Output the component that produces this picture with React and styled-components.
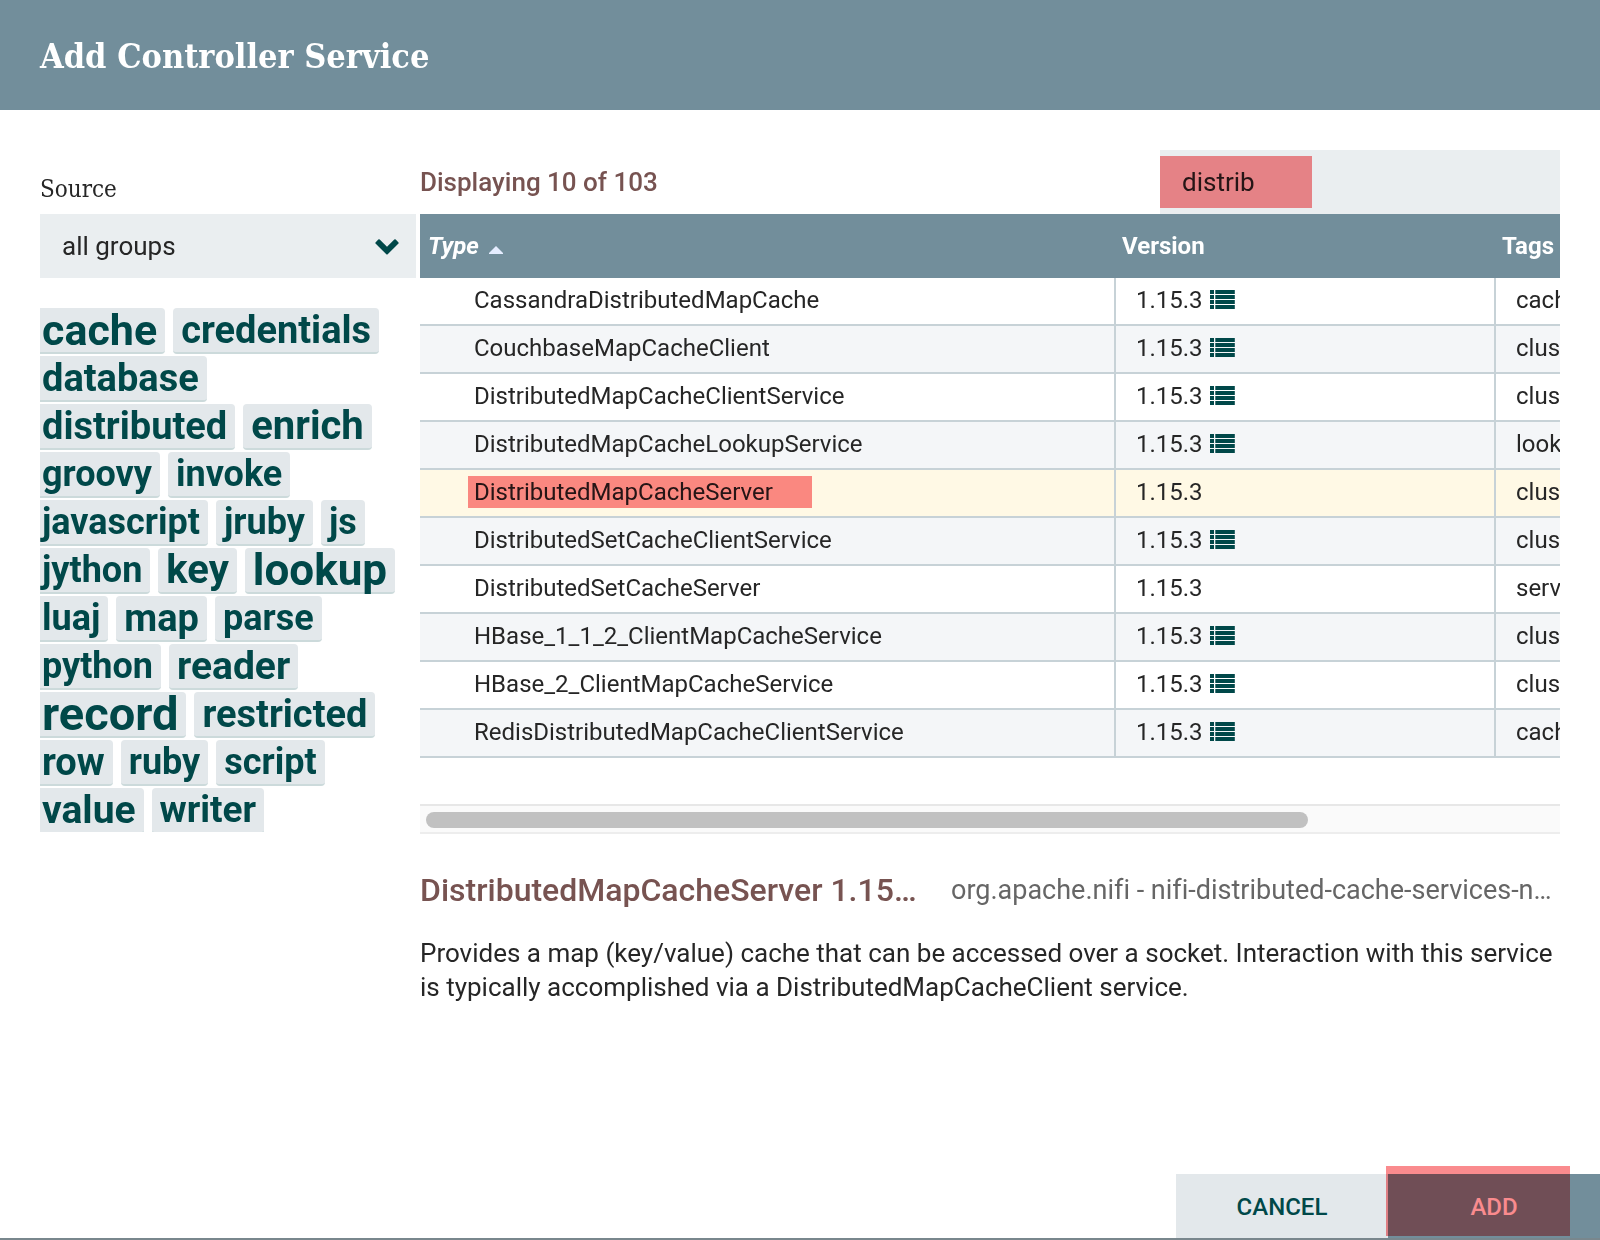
import React, { useState } from "react";
import styled, { createGlobalStyle, css } from "styled-components";

const color = {
  slate: "#728e9b",
  teal: "#004849",
  ink: "#262626",
  brown: "#775351",
  field: "#eaeef0",
  tag: "#e3e8eb",
  line: "#c7d2d7",
  marker: "#fa8b8e",
};

const sans = `Roboto, "Liberation Sans", sans-serif`;
const slab = `"DejaVu Serif Condensed", "DejaVu Serif", serif`;

const GlobalStyle = createGlobalStyle`
  *, *::before, *::after { box-sizing: border-box; }
  body { margin: 0; background: #fff; color: ${color.ink}; font: 24px/44px ${sans}; }
  button, input, select { margin: 0; border: 0; border-radius: 0; font-family: inherit; }
`;

const Dialog = styled.div`
  display: flex;
  flex-direction: column;
  min-height: 100vh;
  border-bottom: 2px solid #79878d;
`;

const Header = styled.header`
  display: flex;
  align-items: center;
  height: 110px;
  padding: 2px 40px 0;
  background: ${color.slate};
`;

const Title = styled.h1`
  margin: 0;
  color: #fff;
  font: 700 34px/44px ${slab};
`;

const Body = styled.main`
  display: grid;
  grid-template-columns: 376px minmax(0, 1fr);
  gap: 4px;
  padding: 40px;
`;

const Sidebar = styled.aside`
  display: flex;
  flex-direction: column;
`;

const SourceLabel = styled.label`
  margin-top: 14px;
  font: 24px/50px ${slab};
`;

const SelectBox = styled.div`
  position: relative;
`;

const SourceSelect = styled.select`
  appearance: none;
  width: 100%;
  height: 64px;
  padding: 0 60px 0 22px;
  background: ${color.field};
  color: ${color.ink};
  font-size: 26px;
`;

const Chevron = styled.svg`
  position: absolute;
  top: 25px;
  right: 17px;
  width: 24px;
  height: 16px;
  fill: ${color.teal};
  pointer-events: none;
`;

const TagCloud = styled.div`
  height: 524px;
  margin-top: 30px;
  overflow: hidden;
`;

const TagList = styled.ul`
  display: flex;
  flex-wrap: wrap;
  gap: 2px 8px;
  margin: 0 0 0 -6px;
  padding: 0 8px 0 0;
  list-style: none;
`;

const Tag = styled.button`
  display: block;
  height: 46px;
  padding: 0 8px;
  border-bottom: 2px solid #ccdadb;
  border-radius: 4px;
  background: ${color.tag};
  color: ${color.teal};
  font-size: ${(p) => p.$size}px;
  font-weight: 700;
  line-height: 44px;
`;

const Content = styled.section`
  min-width: 0;
`;

const Toolbar = styled.div`
  display: flex;
  justify-content: space-between;
  align-items: center;
  height: 64px;
`;

const Count = styled.div`
  color: ${color.brown};
  font-size: 26px;
  font-weight: 500;
`;

const SearchBox = styled.div`
  position: relative;
  width: 400px;
`;

const SearchInput = styled.input`
  display: block;
  width: 100%;
  height: 64px;
  padding: 0 22px;
  background: ${color.field};
  color: ${color.ink};
  font-size: 26px;
  outline: none;
`;

const Marker = styled.span`
  position: absolute;
  top: ${(p) => p.$top}px;
  left: ${(p) => p.$left}px;
  width: ${(p) => p.$width}px;
  height: ${(p) => p.$height}px;
  background: ${color.marker};
  mix-blend-mode: multiply;
  pointer-events: none;
`;

const Viewport = styled.div`
  height: 590px;
  overflow: hidden;
`;

const Table = styled.table`
  width: 128%;
  table-layout: fixed;
  border-collapse: separate;
  border-spacing: 0;
`;

const Col = styled.col`
  width: ${(p) => (p.$width ? p.$width + "px" : "auto")};
`;

const HeadCell = styled.th`
  height: 64px;
  padding: 0 6px;
  background: ${color.slate};
  color: #fff;
  font-weight: 700;
  text-align: left;
  ${(p) => p.$sorted && css`padding-left: 8px; font-style: italic;`}
`;

const SortArrow = styled.svg`
  width: 14px;
  height: 8px;
  margin-left: 10px;
  fill: #e5edff;
`;

const Row = styled.tr`
  background: #fff;
  &:nth-child(even) { background: #f4f6f8; }
  ${(p) => p.$selected && css`&&& { background: #fff9e5; }`}
`;

const Cell = styled.td`
  height: 48px;
  padding: 0 20px 2px ${(p) => (p.$indent ? 54 : 20)}px;
  border-right: 2px solid ${color.line};
  border-bottom: 2px solid ${color.line};
  line-height: 44px;
  white-space: nowrap;
`;

const TypeName = styled.span`
  position: relative;
  display: inline-block;
  vertical-align: top;
`;

const VersionValue = styled.span`
  display: flex;
  align-items: center;
  gap: 7px;
`;

const ListGlyph = styled.svg`
  width: 25px;
  height: 20px;
  fill: ${color.teal};
`;

const Track = styled.div`
  height: 30px;
  padding: 6px;
  border-top: 2px solid #e7e7e7;
  border-bottom: 2px solid #ededed;
  background: #fafafa;
`;

const Thumb = styled.div`
  width: 78.2%;
  height: 16px;
  border-radius: 8px;
  background: #c1c1c1;
`;

const Details = styled.div`
  display: flex;
  gap: 33px;
  margin-top: 40px;
  padding-right: 8px;
  line-height: 32px;
`;

const DetailName = styled.h2`
  flex: 0 0 498px;
  margin: 0;
  padding-bottom: 6px;
  overflow: hidden;
  color: ${color.brown};
  font-size: 32px;
  font-weight: 500;
  text-overflow: ellipsis;
  white-space: nowrap;
`;

const DetailBundle = styled.div`
  flex: 1;
  min-width: 0;
  overflow: hidden;
  color: #666;
  font-size: 27px;
  font-variant-ligatures: none;
  text-overflow: ellipsis;
  white-space: nowrap;
`;

const Description = styled.p`
  margin: 24px 0 0;
  font-size: 26px;
  line-height: 34px;
`;

const Footer = styled.footer`
  display: flex;
  justify-content: flex-end;
  margin-top: auto;
`;

const Action = styled.button`
  position: relative;
  width: 212px;
  height: 64px;
  padding: 2px 0 0;
  background: ${(p) => (p.$primary ? color.slate : color.tag)};
  color: ${(p) => (p.$primary ? "#fff" : color.teal)};
  font-size: 24px;
  font-weight: 500;
`;

const tags = [
  ["cache", 43], ["credentials", 38], ["database", 38], ["distributed", 38],
  ["enrich", 40], ["groovy", 36], ["invoke", 36], ["javascript", 36],
  ["jruby", 36], ["js", 36], ["jython", 36], ["key", 40], ["lookup", 44],
  ["luaj", 36], ["map", 38], ["parse", 36], ["python", 36], ["reader", 39],
  ["record", 47], ["restricted", 38], ["row", 38], ["ruby", 36],
  ["script", 36], ["value", 39], ["writer", 37],
];

const services = [
  { type: "CassandraDistributedMapCache", versions: true, tags: "cache, map" },
  { type: "CouchbaseMapCacheClient", versions: true, tags: "cluster, map" },
  { type: "DistributedMapCacheClientService", versions: true, tags: "cluster, map" },
  { type: "DistributedMapCacheLookupService", versions: true, tags: "lookup, map" },
  { type: "DistributedMapCacheServer", versions: false, tags: "cluster, map" },
  { type: "DistributedSetCacheClientService", versions: true, tags: "cluster, set" },
  { type: "DistributedSetCacheServer", versions: false, tags: "server, set" },
  { type: "HBase_1_1_2_ClientMapCacheService", versions: true, tags: "cluster, map" },
  { type: "HBase_2_ClientMapCacheService", versions: true, tags: "cluster, map" },
  { type: "RedisDistributedMapCacheClientService", versions: true, tags: "cache, map" },
];

function ListIcon() {
  return (
    <ListGlyph viewBox="0 0 25 20" aria-hidden="true">
      {[0, 5, 10, 15].map((y) => (
        <React.Fragment key={y}>
          <rect x="0" y={y} width="4" height="4" />
          <rect x="5.3" y={y} width="19.5" height="4" />
        </React.Fragment>
      ))}
    </ListGlyph>
  );
}

export default function App() {
  const [filter, setFilter] = useState("distrib");
  const [selected, setSelected] = useState("DistributedMapCacheServer");

  return (
    <>
      <GlobalStyle />
      <Dialog>
        <Header>
          <Title>Add Controller Service</Title>
        </Header>
        <Body>
          <Sidebar>
            <SourceLabel htmlFor="source">Source</SourceLabel>
            <SelectBox>
              <SourceSelect id="source">
                <option>all groups</option>
              </SourceSelect>
              <Chevron viewBox="0 0 24 16" aria-hidden="true">
                <path d="M.5 3.4 3.3.5Q4 0 4.7.5L12 7.7 19.3.5Q20 0 20.7.5L23.5 3.4Q24 4 23.5 4.6L12.7 15.2Q12 15.8 11.3 15.2L.5 4.6Q0 4 .5 3.4Z" />
              </Chevron>
            </SelectBox>
            <TagCloud>
              <TagList>
                {tags.map(([name, size]) => (
                  <li key={name}>
                    <Tag type="button" $size={size}>{name}</Tag>
                  </li>
                ))}
              </TagList>
            </TagCloud>
          </Sidebar>
          <Content>
            <Toolbar>
              <Count>Displaying 10 of 103</Count>
              <SearchBox>
                <SearchInput
                  type="text"
                  aria-label="Filter"
                  value={filter}
                  onChange={(e) => setFilter(e.target.value)}
                />
                <Marker $top={6} $left={0} $width={152} $height={52} />
              </SearchBox>
            </Toolbar>
            <Viewport>
              <Table>
                <colgroup>
                  <Col $width={696} />
                  <Col $width={380} />
                  <Col />
                </colgroup>
                <thead>
                  <tr>
                    <HeadCell $sorted aria-sort="ascending">
                      Type
                      <SortArrow viewBox="0 0 14 8" aria-hidden="true">
                        <path d="M7 0 14 7V8H0V7Z" />
                      </SortArrow>
                    </HeadCell>
                    <HeadCell>Version</HeadCell>
                    <HeadCell>Tags</HeadCell>
                  </tr>
                </thead>
                <tbody>
                  {services.map((s) => (
                    <Row key={s.type} $selected={s.type === selected} onClick={() => setSelected(s.type)}>
                      <Cell $indent>
                        <TypeName>
                          {s.type}
                          {s.type === "DistributedMapCacheServer" && (
                            <Marker $top={6} $left={-6} $width={344} $height={32} />
                          )}
                        </TypeName>
                      </Cell>
                      <Cell>
                        <VersionValue>
                          1.15.3
                          {s.versions && <ListIcon />}
                        </VersionValue>
                      </Cell>
                      <Cell>{s.tags}</Cell>
                    </Row>
                  ))}
                </tbody>
              </Table>
            </Viewport>
            <Track>
              <Thumb />
            </Track>
            <Details>
              <DetailName>{selected} 1.15.3</DetailName>
              <DetailBundle>org.apache.nifi - nifi-distributed-cache-services-nar</DetailBundle>
            </Details>
            <Description>
              Provides a map (key/value) cache that can be accessed over a socket. Interaction with
              this service is typically accomplished via a DistributedMapCacheClient service.
            </Description>
          </Content>
        </Body>
        <Footer>
          <Action type="button">CANCEL</Action>
          <Action type="button" $primary>
            ADD
            <Marker $top={-8} $left={-2} $width={184} $height={70} />
          </Action>
        </Footer>
      </Dialog>
    </>
  );
}
